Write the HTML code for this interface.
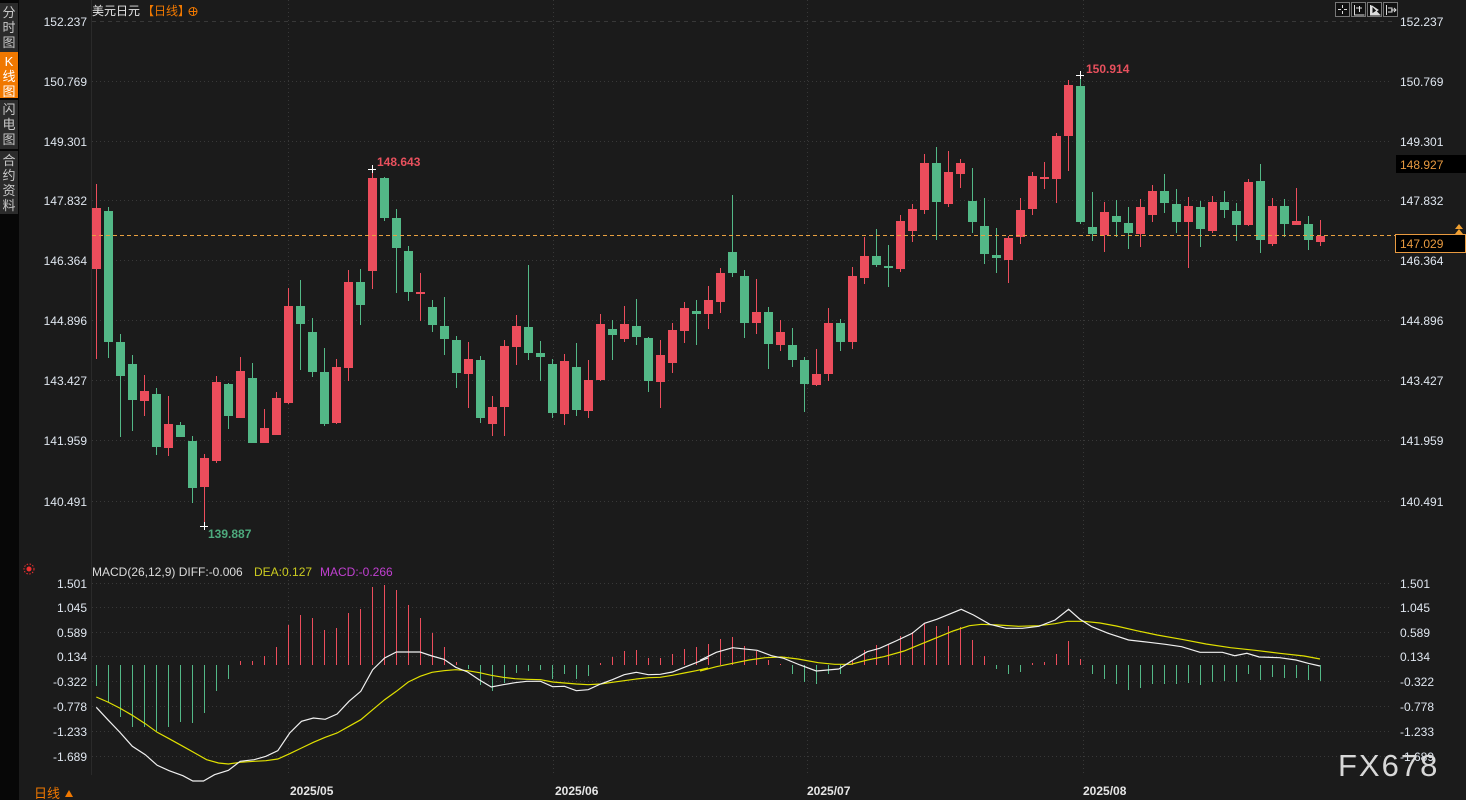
<!DOCTYPE html>
<html><head><meta charset="utf-8"><style>
html,body{margin:0;padding:0;background:#1b1b1b;width:1466px;height:800px;overflow:hidden}
body{font-family:"Liberation Sans","Noto Sans CJK SC",sans-serif;position:relative}
.side{position:absolute;left:0;top:0;width:19px;height:800px;background:#070707}
.tab{position:absolute;left:0;width:18px;background:#2b2b2b;color:#c8c8c8;font-size:13px;line-height:15px;text-align:center;font-family:"Liberation Sans","Noto Sans CJK SC",sans-serif}
.tab.on{background:#f07800;color:#fff}
</style></head><body>
<div class="side">
<div class="tab" style="top:3px;height:47px;padding-top:2px">分<br>时<br>图</div>
<div class="tab on" style="top:52px;height:44px;padding-top:2px">K<br>线<br>图</div>
<div class="tab" style="top:100px;height:47px;padding-top:2px">闪<br>电<br>图</div>
<div class="tab" style="top:151px;height:61px;padding-top:2px">合<br>约<br>资<br>料</div>
</div>
<svg id="s" width="1466" height="800" style="position:absolute;left:0;top:0" xmlns="http://www.w3.org/2000/svg"></svg>
<script>
var S=document.getElementById('s'),h='';
var R='#ec4d5c',G='#53b887';
function L(x1,y1,x2,y2,c,w,d){h+='<line x1="'+x1+'" y1="'+y1+'" x2="'+x2+'" y2="'+y2+'" stroke="'+c+'" stroke-width="'+(w||1)+'"'+(d?' stroke-dasharray="'+d+'"':'')+'/>';}
function T(x,y,t,c,sz,a,b){h+='<text x="'+x+'" y="'+y+'" fill="'+c+'" font-size="'+(sz||12)+'"'+(a?' text-anchor="'+a+'"':'')+(b?' font-weight="bold"':'')+'>'+t+'</text>';}
// grids
var gy=[21,81,141,200,260,320,380,440,501];
gy.forEach(function(y,i){L(92,y+.5,1392,y+.5,'#383838',1,i==0?'4,4':'1,3');});
var my=[583,607,632,656,681,706,731,756];
my.forEach(function(y){L(92,y+.5,1392,y+.5,'#383838',1,'1,3');});
[288,553,807,1083].forEach(function(x){L(x+.5,0,x+.5,775,'#383838',1,'1,3');});
L(91.5,0,91.5,775,'#2a2a2a',1);
// price labels
var pl=['152.237','150.769','149.301','147.832','146.364','144.896','143.427','141.959','140.491'];
gy.forEach(function(y,i){T(87,y+5,pl[i],'#dfe6ef',12,'end');if(i!=4&&i!=3)T(1400,y+5,pl[i],'#dfe6ef',12);});
T(1400,205,'147.832','#dfe6ef',12);T(1400,265,'146.364','#dfe6ef',12);
var ml=['1.501','1.045','0.589','0.134','-0.322','-0.778','-1.233','-1.689'];
my.forEach(function(y,i){T(87,y+5,ml[i],'#dfe6ef',12,'end');T(1400,y+5,ml[i],'#dfe6ef',12);});
// candles [top,bot,wt,wb,c]
var C=[[208,269,184,359,R],[211,342,207,358,G],[342,376,334,437,G],[364,400,355,431,G],[391,401,375,416,R],[394,447,388,455,G],[424,448,396,456,R],[425,437,422,437,G],[441,488,436,503,G],[458,487,454,526,R],
[382,461,376,463,R],[384,416,383,429,G],[371,418,357,418,R],[378,443,363,443,G],[428,443,409,443,R],[398,435,392,435,R],[306,403,288,404,R],[306,324,280,370,G],[332,372,318,377,G],[372,424,348,426,G],
[367,423,359,424,R],[282,368,270,381,R],[282,305,269,325,G],[178,271,168,289,R],[178,218,177,221,G],[218,248,209,293,G],[251,292,246,301,G],[292,294,273,321,R],[307,325,300,332,G],[326,339,297,355,G],
[340,373,336,388,G],[359,374,342,408,R],[360,418,356,423,G],[407,424,396,436,R],[346,407,340,436,R],[326,347,315,365,R],[327,353,265,360,G],[353,357,341,381,G],[364,413,359,418,G],[361,414,354,425,R],
[367,410,343,416,G],[380,411,360,418,R],[324,380,314,381,R],[329,335,320,360,G],[324,339,306,342,R],[326,337,299,345,G],[338,381,337,392,G],[355,382,340,408,R],[330,363,323,373,R],[308,331,302,343,R],
[311,314,300,345,G],[300,314,286,329,R],[273,302,268,313,R],[252,273,195,277,G],[276,323,270,338,G],[312,323,279,334,R],[312,344,307,369,G],[332,345,320,351,R],[345,360,328,367,G],[360,384,357,412,G],
[374,385,349,386,R],[323,374,308,381,R],[323,342,319,351,G],[276,342,267,349,R],[256,278,237,284,R],[256,265,229,267,G],[266,268,245,287,G],[221,269,215,272,R],[209,231,204,242,R],[163,210,154,214,R],
[163,202,147,240,G],[172,204,151,207,R],[163,174,159,188,R],[201,222,168,233,G],[226,254,198,264,G],[255,258,228,273,G],[238,260,236,283,R],[210,237,198,244,R],[176,209,172,215,R],[177,179,162,189,R],
[136,179,133,203,R],[85,136,80,171,R],[86,222,75,224,G],[227,234,192,241,G],[212,235,202,252,R],[216,222,200,237,G],[223,233,207,249,G],[207,234,199,247,R],[191,215,185,222,R],[191,203,174,213,G],
[204,222,189,233,G],[206,222,197,268,R],[207,229,201,247,G],[202,231,196,233,R],[202,210,191,218,G],[211,225,203,241,G],[182,225,179,226,R],[181,240,164,253,G],[206,244,198,246,R],[206,224,199,237,G],
[221,225,188,225,R],[224,240,216,250,G],[236,242,220,246,R]];
C.forEach(function(c,i){var x=Math.round(96.3+12*i);L(x+.5,c[2],x+.5,c[3],c[4],1);var hh=Math.max(2,c[1]-c[0]);h+='<rect x="'+(x-4)+'" y="'+c[0]+'" width="9" height="'+hh+'" fill="'+c[4]+'"/>';});
// current price dashed line
L(92,235.5,1395,235.5,'#e8a040',1,'4,3');
h+='<rect x="1396" y="155" width="70" height="18" fill="#000"/>';T(1400,169,'148.927','#e89a40',12);
h+='<rect x="1395.5" y="234.5" width="70" height="18" fill="#000" stroke="#e89a40"/>';T(1400,248,'147.029','#e89a40',12);
h+='<path d="M1455 234l4-5 4 5zM1455 229l4-5 4 5z" fill="#f0a030"/>';
// markers
function X(x,y){L(x-4,y+.5,x+4,y+.5,'#fff');L(x+.5,y-4,x+.5,y+4,'#fff');}
X(372,169);X(204,526);X(1080,75);
T(377,166,'148.643','#e8505d',12,0,1);T(208,538,'139.887','#4daa7d',12,0,1);T(1086,73,'150.914','#e8505d',12,0,1);
// title
T(92,15,'美元日元','#e6e6e6',12);T(142,15,'【日线】','#f07800',12);
h+='<circle cx="193" cy="11.5" r="4" fill="none" stroke="#f07800"/>';L(189,11.5,197,11.5,'#f07800');L(193.5,7.5,193.5,15.5,'#f07800');
// top right icons
[1335,1351,1367,1383].forEach(function(x,i){h+='<rect x="'+(x+.5)+'" y="2.5" width="14" height="14" fill="#111" stroke="#777"/>';});
h+='<path d="M1342.5 5v3M1342.5 11v3M1338 9.5h3M1344 9.5h3" stroke="#ddd"/>';
h+='<path d="M1354.5 5v10h10M1356 8h6M1359.5 6v6" stroke="#ddd" fill="none"/>';
h+='<path d="M1370.5 5v10h10M1372 6l6 4-6 4z" stroke="#ddd" fill="#ddd"/>';
h+='<path d="M1386.5 5v10M1388 8h4v4h-4M1391 10h5M1394 8l2 2-2 2" stroke="#ddd" fill="none"/>';
// MACD header
h+='<circle cx="29" cy="569" r="2.5" fill="#f03030"/><circle cx="29" cy="569" r="5" fill="none" stroke="#f03030" stroke-dasharray="1.5,1.5"/>';
T(92,576,'MACD(26,12,9) DIFF:-0.006','#dcdcdc',12);T(254,576,'DEA:0.127','#cccc20',12);T(320,576,'MACD:-0.266','#c040d0',12);
// histogram
var M=[686,702,717,727,727,732,727,722,723,713,691,679,661,661,656,647,625,615,618,630,628,613,609,587,585,590,605,618,633,647,662,669,685,691,683,673,671,670,679,674,679,676,663,657,651,650,658,658,654,649,647,
644,639,637,646,651,660,664,674,682,684,674,674,661,650,645,644,636,632,623,626,626,627,640,656,669,674,672,663,662,654,641,659,
674,679,684,690,688,684,684,684,683,685,682,681,682,674,680,677,678,678,680,681];
M.forEach(function(y,i){var x=Math.round(96.3+12*i)+.5;L(x,665,x,y,y<665?R:G,1);});
function P(pts,ox,sx,oy,c){var d='';pts.forEach(function(p,i){d+=(i?'L':'M')+(ox+p[0]/sx).toFixed(1)+' '+(oy+p[1]/3).toFixed(1);});h+='<path d="'+d+'" fill="none" stroke="'+c+'" stroke-width="1.2"/>';}
var W1=[[21,388],[50,425],[80,462],[112,505],[145,530],[175,562],[205,578],[240,593],[265,609],[292,609],[320,590],[355,577],[385,550],[420,545],[450,535],[480,518],[510,465],[540,430],[570,420],[600,424],[630,408],[660,370],[690,340],[720,275],[750,240],[780,222],[840,222],[870,234],[900,244],[930,268],[960,282],[990,306],[1020,327],[1050,320],[1080,314],[1110,310],[1145,310],[1175,326],[1205,325],[1235,338],[1265,335],[1296,318],[1326,305],[1356,290],[1387,283],[1417,290],[1447,289],[1478,282],[1508,268],[1538,254],[1568,240]];
var Y1=[[21,357],[50,372],[80,390],[112,412],[145,437],[175,463],[205,482],[240,505],[270,525],[300,545],[330,555],[355,558],[385,553],[420,550],[450,548],[480,543],[510,527],[540,510],[570,493],[600,478],[630,465],[660,445],[690,425],[720,395],[750,365],[780,340],[810,312],[840,295],[870,283],[900,278],[930,275],[960,278],[990,284],[1020,292],[1050,298],[1080,302],[1110,304],[1145,305],[1175,312],[1205,315],[1235,318],[1265,320],[1296,318],[1326,313],[1356,308],[1387,303],[1417,299],[1447,298],[1478,292],[1508,285],[1538,278],[1568,270]];
var W2=[[0,196],[40,172],[80,158],[140,166],[175,182],[205,190],[245,210],[285,228],[340,222],[375,195],[410,170],[440,160],[480,138],[520,115],[550,85],[580,73],[610,58],[640,43],[670,60],[710,88],[750,100],[790,100],[830,94],[870,75],[903,43],[930,72],[960,95],[1000,115],[1050,135],[1100,142],[1140,148],[1180,155],[1225,172],[1280,172],[1310,182],[1340,175],[1370,186],[1420,188],[1460,195],[1490,205],[1519,213]];
var Y2=[[0,228],[40,215],[80,205],[120,195],[160,188],[200,186],[240,192],[290,203],[330,208],[370,208],[410,195],[450,185],[500,168],[540,148],[580,128],[620,108],[660,92],[690,88],[730,90],[780,94],[830,92],[870,86],[900,79],[940,79],[980,84],[1020,93],[1070,107],[1120,120],[1180,133],[1240,147],[1300,158],[1360,166],[1420,175],[1480,183],[1519,192]];
P(Y1,88,2.529,578,'#e0e000');P(Y2,700,2.45,595,'#e0e000');
P(W1,88,2.529,578,'#f0f0f0');P(W2,700,2.45,595,'#f0f0f0');
// bottom axis
T(290,795,'2025/05','#e6e6e6',12,0,1);T(555,795,'2025/06','#e6e6e6',12,0,1);T(807,795,'2025/07','#e6e6e6',12,0,1);T(1083,795,'2025/08','#e6e6e6',12,0,1);
T(34,798,'日线','#f07800',13);h+='<path d="M65 797l4-7 4 7z" fill="#f07800"/>';
h+='<text x="1338" y="776" fill="#d8d8d8" font-size="31" letter-spacing="2">FX678</text>';
S.innerHTML=h;
</script>
</body></html>
